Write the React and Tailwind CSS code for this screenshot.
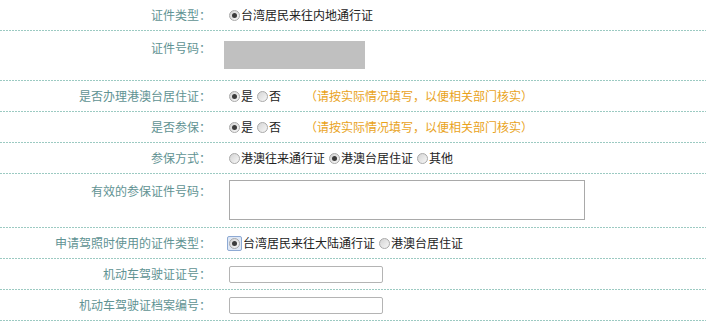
import React from "react";

const font = "font-['Noto_Sans_CJK_SC','Noto_Sans',sans-serif]";

function Radio({ checked, focus }) {
  const dot = (
    <span className="flex h-[11px] w-[11px] shrink-0 items-center justify-center rounded-full border border-[#a9a9a9] bg-[linear-gradient(135deg,#d4d4d4,#f7f7f7)]">
      {checked && <span className="h-[5px] w-[5px] rounded-full bg-[#3c3c3c]" />}
    </span>
  );
  if (focus) {
    return (
      <span className="-ml-[2px] flex h-[15px] w-[15px] shrink-0 items-center justify-center rounded-[2px] border border-[#8eaad4] bg-[#dfe8f6]">
        {dot}
      </span>
    );
  }
  return dot;
}

function Option({ label, checked, focus, first }) {
  return (
    <span className={`flex items-center ${first ? "ml-[5px]" : "ml-[4px]"}`}>
      <Radio checked={checked} focus={focus} />
      <span className="ml-px text-[#222]">{label}</span>
    </span>
  );
}

function Hint() {
  return (
    <span className="ml-[24px] text-[#e9a31c]">
      （请按实际情况填写，以便相关部门核实）
    </span>
  );
}

function Row({ label, h, top, labelPt, children }) {
  return (
    <div>
      <div className={`flex ${h} ${top ? "items-start" : "items-center"}`}>
        <div
          className={`w-[211px] shrink-0 text-right text-[#5f9393] ${top ? labelPt : ""}`}
        >
          {label}
        </div>
        <div className={`ml-[13px] flex items-center ${top ? "pt-[6px]" : ""}`}>
          {children}
        </div>
      </div>
      <div className="h-px bg-[linear-gradient(to_right,#9ccac2_2px,transparent_2px)] bg-[length:3px_1px] bg-repeat-x" />
    </div>
  );
}

export default function App() {
  return (
    <div className={`w-[706px] bg-white text-[12px] leading-[18px] ${font}`}>
      <Row label="证件类型：" h="h-[30px]">
        <Option first checked label="台湾居民来往内地通行证" />
      </Row>

      <Row label="证件号码：" h="h-[49px]" top labelPt="pt-[8px]">
        <div className="mt-[4px] h-[28px] w-[141px] bg-[#c0c0c0]" />
      </Row>

      <Row label="是否办理港澳台居住证：" h="h-[30px]">
        <Option first checked label="是" />
        <Option label="否" />
        <Hint />
      </Row>

      <Row label="是否参保：" h="h-[30px]">
        <Option first checked label="是" />
        <Option label="否" />
        <Hint />
      </Row>

      <Row label="参保方式：" h="h-[30px]">
        <Option first label="港澳往来通行证" />
        <Option checked label="港澳台居住证" />
        <Option label="其他" />
      </Row>

      <Row label="有效的参保证件号码：" h="h-[53px]" top labelPt="pt-[8px]">
        <textarea className="ml-[5px] h-[40px] w-[356px] resize-none border border-[#a9a9a9] outline-none" />
      </Row>

      <Row label="申请驾照时使用的证件类型：" h="h-[30px]">
        <Option first checked focus label="台湾居民来往大陆通行证" />
        <Option label="港澳台居住证" />
      </Row>

      <Row label="机动车驾驶证证号：" h="h-[30px]">
        <input className="ml-[5px] h-[17px] w-[154px] rounded-[2px] border border-[#b4b4b4] outline-none" />
      </Row>

      <Row label="机动车驾驶证档案编号：" h="h-[30px]">
        <input className="ml-[5px] h-[17px] w-[154px] rounded-[2px] border border-[#b4b4b4] outline-none" />
      </Row>
    </div>
  );
}
